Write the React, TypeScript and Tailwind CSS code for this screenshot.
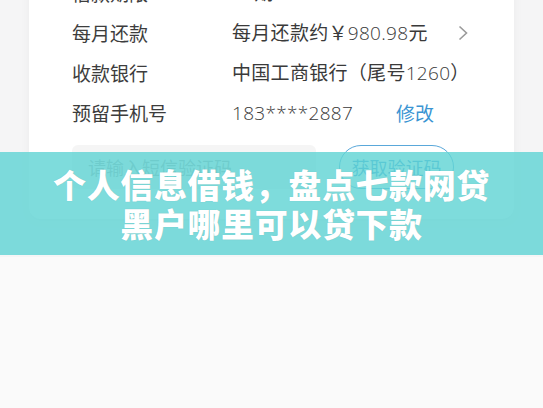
import React from 'react'

const Num = ({ children }: { children: React.ReactNode }) => (
  <span className="font-light font-['Open_Sans','Noto_Sans_CJK_SC',sans-serif]">{children}</span>
)

const rows = [
  { label: '借款期限', value: <><Num>12</Num>期</> },
  { label: '每月还款', value: <>每月还款约￥<Num>980.98</Num>元</>, arrow: true },
  { label: '收款银行', value: <>中国工商银行（尾号<Num>1260</Num>）</> },
  { label: '预留手机号', value: <Num>183****2887</Num>, action: '修改' },
]

export default function App() {
  return (
    <div
      className="relative w-[543px] h-[408px] overflow-hidden bg-[#fafafa]"
      style={{ fontFamily: '"Noto Sans CJK SC", "Noto Sans", sans-serif' }}
    >
      <div className="bg-[#f5f5f6] pb-[38px] px-[29px]">
        {/* card */}
        <div className="-mt-[27px] bg-white rounded-b-[12px] shadow-[0_2px_10px_rgba(0,0,0,0.05)] pl-[43px] pr-[44px] pb-[30px]">
          {rows.map((r) => (
            <div key={r.label} className="flex items-center h-[40px] text-[19px] text-[#3d3d3d]">
              <span className="w-[160px]">{r.label}</span>
              <span className="text-[#3a3a3a] tracking-[0.3px]">{r.value}</span>
              {r.arrow && (
                <svg className="ml-auto mr-[2px]" width="10" height="16" viewBox="0 0 10 16" fill="none">
                  <path d="M1.5 1.5 8.5 8 1.5 14.5" stroke="#9a9a9a" strokeWidth="1.6" />
                </svg>
              )}
              {r.action && <span className="ml-[43px] text-[#3b95d3]">{r.action}</span>}
            </div>
          ))}
          <div className="flex items-center mt-[12px]">
            <div className="w-[244px] h-[44px] rounded-[6px] bg-[#f5f5f5] flex items-center pl-[16px] text-[18px] text-[#a8a8a8]">
              请输入短信验证码
            </div>
            <button className="ml-[23px] w-[115px] h-[44px] rounded-full border border-[#5aa8da] text-[18px] text-[#3b95d3]">
              获取验证码
            </button>
          </div>
        </div>
      </div>

      {/* headline overlay */}
      <div className="absolute left-0 right-0 top-[152px] h-[103px] bg-[rgba(98,212,212,0.82)] flex flex-col items-center justify-center">
        <div className="text-white font-black text-[33px] leading-[39px] tracking-[0.6px] text-center [text-shadow:0_0_1px_rgba(0,0,0,0.15)]">
          <div>个人信息借钱，盘点七款网贷</div>
          <div>黑户哪里可以贷下款</div>
        </div>
      </div>
    </div>
  )
}
